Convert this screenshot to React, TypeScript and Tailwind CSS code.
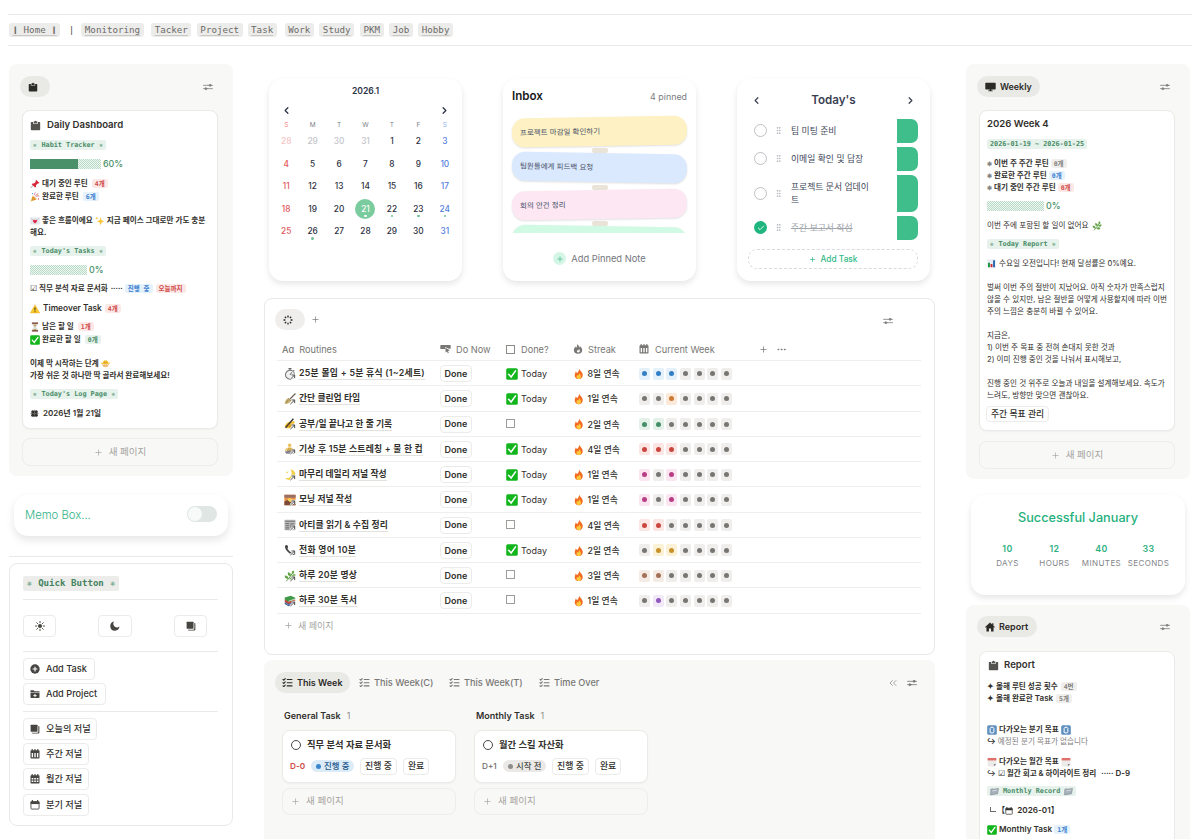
import React from 'react';
import { ChevronLeft, ChevronRight, ChevronsLeft, Check, Plus, Ellipsis, GripVertical } from 'lucide-react';

type IconProps = { className?: string };

const Clipboard = ({ className = '' }: IconProps) => (
  <svg viewBox="0 0 16 16" className={className} fill="currentColor">
    <path d="M2 3h2.500v2.600h7V3H14a.8.8 0 0 1 .8.8v10a1.200 1.200 0 0 1-1.200 1.200H2.400A1.200 1.200 0 0 1 1.200 13.800v-10A.8.8 0 0 1 2 3z" />
    <path d="M5.400 4.700V2.200h1.200a1.500 1.500 0 0 1 2.800 0h1.200v2.500z" />
  </svg>
);

const Sliders = ({ className = '' }: IconProps) => (
  <svg viewBox="0 0 18 14" className={className} fill="none" stroke="currentColor" strokeWidth="1.500" strokeLinecap="round">
    <path d="M1 4h10M15 4h2M1 10h2M7 10h10" />
    <circle cx="12.800" cy="4" r="1.800" fill="currentColor" />
    <circle cx="5.200" cy="10" r="1.800" fill="currentColor" />
  </svg>
);

const Spinner = ({ className = '' }: IconProps) => (
  <svg viewBox="0 0 16 16" className={className} fill="none" stroke="currentColor" strokeWidth="2.200">
    <path d="M8 .8v3M8 12.200v3M.8 8h3M12.200 8h3M2.900 2.900l2.100 2.100M11 11l2.100 2.100M2.900 13.100 5 11M11 5l2.100-2.100" />
  </svg>
);

const Clover = ({ className = '' }: IconProps) => (
  <svg viewBox="0 0 16 16" className={className} fill="currentColor">
    <circle cx="5" cy="5" r="2.900" />
    <circle cx="11" cy="5" r="2.900" />
    <circle cx="5" cy="11" r="2.900" />
    <circle cx="11" cy="11" r="2.900" />
    <path d="M.8 8h14.400M8 1.500v13" stroke="currentColor" strokeWidth="1" />
  </svg>
);

const Monitor = ({ className = '' }: IconProps) => (
  <svg viewBox="0 0 18 16" className={className} fill="currentColor">
    <path d="M1.500 1h15a1 1 0 0 1 1 1v9a1 1 0 0 1-1 1h-6v1.800h2.200V15H5.300v-1.200h2.200V12h-6a1 1 0 0 1-1-1V2a1 1 0 0 1 1-1z" />
  </svg>
);

const House = ({ className = '' }: IconProps) => (
  <svg viewBox="0 0 16 16" className={className} fill="currentColor">
    <path d="M8 .8 11.500 4V2h2v3.800L15.800 8l-.9 1-1.200-1v7H9.700v-4.500H6.300V15H2.300V8l-1.200 1-.9-1z" />
  </svg>
);

const Sun = ({ className = '' }: IconProps) => (
  <svg viewBox="0 0 16 16" className={className} fill="currentColor">
    <circle cx="8" cy="8" r="3.300" />
    <path d="M8 .6v2.200M8 13.200v2.200M.6 8h2.200M13.200 8h2.200M2.800 2.800l1.500 1.500M11.700 11.700l1.500 1.500M2.800 13.200l1.500-1.500M11.700 4.300l1.500-1.500" stroke="currentColor" strokeWidth="1.500" strokeLinecap="round" />
  </svg>
);

const Moon = ({ className = '' }: IconProps) => (
  <svg viewBox="0 0 16 16" className={className} fill="currentColor">
    <path d="M6.500.8a6 6 0 0 0 8.700 8.100A7.400 7.400 0 1 1 6.500.8z" />
  </svg>
);

const Book = ({ className = '' }: IconProps) => (
  <svg viewBox="0 0 16 16" className={className} fill="currentColor">
    <rect x="1" y="1" width="11" height="11.500" rx="1" />
    <path d="M13.300 3v9.500a1.300 1.300 0 0 1-1.300 1.300H3V14a1.200 1.200 0 0 0 1.200 1.200h9.300A1.500 1.500 0 0 0 15 13.700V4.200A1.200 1.200 0 0 0 13.800 3z" />
  </svg>
);

const PlusCircle = ({ className = '' }: IconProps) => (
  <svg viewBox="0 0 16 16" className={className}>
    <circle cx="8" cy="8" r="7.500" fill="currentColor" />
    <path d="M8 4.200v7.600M4.200 8h7.600" stroke="#fff" strokeWidth="1.800" />
  </svg>
);

const FolderPlus = ({ className = '' }: IconProps) => (
  <svg viewBox="0 0 16 16" className={className}>
    <path d="M.8 2h5l1.500 1.500h7.900v2H.8zM.8 6.500h14.400v6.800a1.200 1.200 0 0 1-1.200 1.200H2a1.200 1.200 0 0 1-1.200-1.200z" fill="currentColor" />
    <path d="M8 8v5M5.500 10.500h5" stroke="#fff" strokeWidth="1.500" />
  </svg>
);

const WeekCal = ({ className = '' }: IconProps) => (
  <svg viewBox="0 0 16 16" className={className}>
    <path d="M3.500 0v3M12.500 0v3M8 0v3" stroke="currentColor" strokeWidth="1.800" />
    <rect x=".8" y="2" width="14.400" height="13" rx="1.200" fill="currentColor" />
    <path d="M3.800 6.200v7M8 6.200v7M12.200 6.200v7" stroke="#fff" strokeWidth="2.200" />
  </svg>
);

const MonthCal = ({ className = '' }: IconProps) => (
  <svg viewBox="0 0 16 16" className={className}>
    <path d="M3.500 0v3M12.500 0v3M8 0v3" stroke="currentColor" strokeWidth="1.800" />
    <rect x=".8" y="2" width="14.400" height="13" rx="1.200" fill="currentColor" />
    <path d="M2.600 7.500h2.700M6.700 7.500h2.700M10.800 7.500h2.700M2.600 11.700h2.700M6.700 11.700h2.700M10.800 11.700h2.700" stroke="#fff" strokeWidth="2.300" />
  </svg>
);

const QuarterCal = ({ className = '' }: IconProps) => (
  <svg viewBox="0 0 16 16" className={className}>
    <path d="M3.800 0v3M12.200 0v3" stroke="currentColor" strokeWidth="1.800" />
    <rect x="1.500" y="2.500" width="13" height="12" rx="1.200" fill="none" stroke="currentColor" strokeWidth="1.400" />
    <path d="M1 2.500h14v4H1z" fill="currentColor" />
  </svg>
);

const TapIcon = ({ className = '' }: IconProps) => (
  <svg viewBox="0 0 18 16" className={className} fill="currentColor">
    <path d="M1.500 1.500h15a1 1 0 0 1 1 1v4a1 1 0 0 1-1 1h-1.700L8 4.700l.8 3.300H1.500a1 1 0 0 1-1-1V2.500a1 1 0 0 1 1-1z" />
    <path d="M8.700 5.800l7.500 4.200-3.200 1.200 1.500 3-1.700.8-1.400-3-2.200 1.800z" />
  </svg>
);

const FlameIcon = ({ className = '' }: IconProps) => (
  <svg viewBox="0 0 16 16" className={className}>
    <path d="M6.500.5c3 1.700 3.300 3.700 3 5.300.9-.3 1.300-1.300 1.200-2.600 2.600 1.700 4 4.300 4 6.500a6.600 6 0 0 1-13.300 0C1.400 7.500 3 6 3.300 4c1 .5 1.500 1.300 1.600 2.200C6.300 4.800 7 2.800 6.500.5z" fill="currentColor" />
    <path d="M9.500 8c1.500 1.300 1.700 2.600 1.300 3.800-.4 1.100-1.300 1.700-2.300 1.700-1.300 0-2.300-1-2.300-2.300 0-.7.300-1.200.7-1.700.3.600.7.900 1.100 1.100.8-.6 1.500-1.400 1.500-2.600z" fill="#fff" />
  </svg>
);

const Checklist = ({ className = '' }: IconProps) => (
  <svg viewBox="0 0 16 14" className={className} fill="none" stroke="currentColor" strokeWidth="1.700" strokeLinecap="round">
    <path d="M1 2.200l1.200 1.200L4.500 1M1 7.200l1.200 1.200L4.500 6M1 12.200l1.200 1.200L4.500 11M7.500 2.300H15M7.500 7.300H15M7.500 12.300H15" />
  </svg>
);

// Small colour pictograms, all on a 16 unit grid
const glyphs: Record<string, React.ReactNode> = {
  pin: (
    <>
      <path d="M1 14.500 6 9" stroke="#8a8f94" strokeWidth="1.200" />
      <path d="M9.500 1 15 6l-1.500 1.200-1-.2-3 3 .2 2.500-1.500 1-5.500-5 1-1.500 2.500.2 3-3-.2-1.200z" fill="#d8293a" />
    </>
  ),
  party: (
    <>
      <path d="M1 15 4.500 5.500l6.500 6z" fill="#e9a93c" />
      <path d="M3 11l3 2.500M4 8l4.500 4.500" stroke="#b5602b" strokeWidth="1" />
      <path d="M7 5c0-2 .5-3 2-4M9 8c2-2 3.500-2 6-1.500M8.500 6.500 13 2" stroke="#c55a8d" strokeWidth="1.300" fill="none" />
      <circle cx="4" cy="2.500" r="1" fill="#3e8ed0" />
      <circle cx="13.500" cy="11" r="1.100" fill="#d8453f" />
      <circle cx="12" cy="4.500" r="1" fill="#e9b82f" />
    </>
  ),
  letter: (
    <>
      <rect x=".5" y="2.500" width="15" height="11" rx="1" fill="#e3e6ea" />
      <path d="M.8 3 8 9l7.200-6" stroke="#bcc2c9" fill="none" />
      <path d="M8 12C5 10 4.500 8.500 4.600 7.300c.3-1.700 2.600-2 3.400-.4.800-1.600 3.100-1.300 3.400.4.100 1.200-.4 2.700-3.400 4.700z" fill="#e02b4b" />
    </>
  ),
  sparkles: (
    <>
      <path d="M9 2l1.500 4.700L15 8.500l-4.500 1.700L9 15l-1.500-4.800L3 8.500l4.500-1.800z" fill="#f8c534" />
      <path d="M3 1l.7 1.800 1.800.7-1.800.7L3 6l-.7-1.800L.5 3.500l1.800-.7z" fill="#f8c534" />
    </>
  ),
  warning: (
    <>
      <path d="M8 1 15.500 14.500H.5z" fill="#fcc72b" stroke="#e8ac15" strokeWidth=".6" strokeLinejoin="round" />
      <path d="M8 5.500v4.800M8 11.600v1.600" stroke="#2e2a1d" strokeWidth="1.500" />
    </>
  ),
  hourglass: (
    <>
      <path d="M4 2h8c0 3.500-2.500 4.500-2.800 6 .3 1.500 2.800 2.500 2.800 6H4c0-3.500 2.500-4.500 2.800-6C6.500 6.500 4 5.500 4 2z" fill="#e3e6e8" stroke="#a3a8ad" strokeWidth=".6" />
      <path d="M5 3.800h6L8 7.500zM5 13.500c.3-2.200 2-2.500 3-2.500s2.700.3 3 2.500z" fill="#c2984f" />
      <path d="M3 .8h10v2H3zM3 13.200h10v2H3z" fill="#6d3527" />
    </>
  ),
  check: (
    <>
      <rect x=".3" y=".3" width="15.400" height="15.400" rx="2" fill="#12b51c" />
      <path d="M3.500 8.300 6.800 12 12.700 3.800" stroke="#fff" strokeWidth="2.100" fill="none" strokeLinecap="round" />
    </>
  ),
  chick: (
    <>
      <path d="M2.500 9C2.500 4 5 2 8 2s5.500 2 5.500 7z" fill="#f6c22e" />
      <path d="M0 7l3 1M16 7l-3 1" stroke="#f6c22e" strokeWidth="2" />
      <path d="M2 8.500l2 1.500 2-1.500L8 10l2-1.500 2 1.500 2-1.500c.3 4-2 6-6 6s-6.300-2-6-6z" fill="#eebd7a" />
      <circle cx="6" cy="5.500" r=".7" fill="#4a3414" />
      <circle cx="10" cy="5.500" r=".7" fill="#4a3414" />
      <path d="M7 6.500h2L8 8z" fill="#d8712b" />
    </>
  ),
  stopwatch: (
    <>
      <circle cx="8" cy="9" r="6" fill="#f1f1f1" stroke="#737373" strokeWidth="1.400" />
      <path d="M8 .5v2.500M6 .8h4M12.500 3l1.300 1.300M8 9l2.500-3" stroke="#666" strokeWidth="1.400" />
    </>
  ),
  broom: (
    <>
      <path d="M15.300.7 8 8" stroke="#6d6455" strokeWidth="1.600" />
      <path d="M6 6.500 9.500 10c-1 3-4 4.500-8.500 4.500C1 11.500 2.500 7.500 6 6.500z" fill="#c9b070" />
      <path d="M5.500 7 9 10.500M3 13l2.500-3.500" stroke="#7e6a3a" strokeWidth=".9" />
    </>
  ),
  writing: (
    <>
      <path d="M1 11c1-3 3-5 6-6l2 .5L13 4l1.500 2-3 3.500 1 2-3 2H3.500z" fill="#f3bd2f" />
      <path d="M12.500 1 2 13" stroke="#38342d" strokeWidth="1.800" />
      <path d="M5 9.500h5M6 11.500h4" stroke="#bb841c" strokeWidth=".9" />
    </>
  ),
  lotus: (
    <>
      <circle cx="7.500" cy="3" r="2.300" fill="#ecc05a" />
      <path d="M5 6h5l1.500 5H3.500z" fill="#d9ad46" />
      <path d="M1 11.500 5 10h5l5 1.500-2 2.800H3z" fill="#85858d" />
      <path d="M4 7 1.500 10.500M11 7l2.500 3.500" stroke="#ecc05a" strokeWidth="1.600" />
    </>
  ),
  moon: (
    <>
      <path d="M8.500.8c5 .2 7 4 6.500 7.700-.6 4-4 6.500-8 6-2.500-.3-4.500-1-6-2.500 4 .8 8-.5 9-4.500.6-2.500 0-5-1.500-6.700z" fill="#f2cf4a" />
      <path d="M4 2.500l.5 1.400 1.400.5-1.400.5L4 6.300l-.5-1.400-1.400-.5 1.400-.5z" fill="#f2cf4a" />
    </>
  ),
  sunrise: (
    <>
      <rect x=".5" y="1" width="15" height="14" rx="1" fill="#eb9344" />
      <path d="M.5 1h15v4H.5z" fill="#9a6f68" />
      <circle cx="7.500" cy="8.500" r="3" fill="#f8d75a" />
      <path d="M.5 15V10l4-2 4 3 3-2 4 2v4z" fill="#7b4b3a" />
    </>
  ),
  news: (
    <>
      <rect x=".5" y="1" width="15" height="14" rx="1" fill="#bdbdbd" />
      <path d="M1.500 3h13M2 6h5M2 8.500h5M2 11h5M2 13.300h5" stroke="#707070" strokeWidth="1.300" />
      <rect x="8.500" y="5.500" width="5.500" height="8" fill="#858585" />
    </>
  ),
  phone: (
    <path d="M2 1.500C4.500.5 5.500 2.500 5.500 4.500L4.600 5.800c1 2.400 3 4.400 5.500 5.500l1.300-.9c2 0 4.300 1 3.300 3.500-4.500 3.500-16.500-8-12.700-12.400z" fill="#494949" />
  ),
  herb: (
    <>
      <path d="M3 15C6 12 9 8 12 3" stroke="#4c8a33" strokeWidth="1.200" fill="none" />
      <path d="M12 5C9.500 4 10 1.500 12.500.5c1.500 2 1.500 3.500-.5 4.500zM9 8C5 8 4.500 5 5.500 3c3 .5 4.500 2.500 3.500 5zM6 12C2.500 12 .5 9.500 1 7.500c3-.2 5.500 2 5 4.500zM10 8c1-2.500 3.500-3 5.500-2-.5 3-3 4-5.500 2zM7 12c1.500-2.500 4.500-2.500 6.500-1-1 2.800-4.500 3.500-6.500 1z" fill="#63a546" />
    </>
  ),
  books: (
    <>
      <path d="M1 9.500l9-2 5 2.500-9 3.500z" fill="#4b79b8" />
      <path d="M1 9.500v2.500l5 3 9-3.500V10l-9 3.500z" fill="#365680" />
      <path d="M1 6l9-2 5 2.500v2l-9 3.500-5-3z" fill="#c54338" />
      <path d="M1 3.300 9 1l6 2.500v2L6 9 1 6z" fill="#409a49" />
      <path d="M6 8.500l9-3.500" stroke="#eee" strokeWidth="1" />
    </>
  ),
  fire: (
    <>
      <path d="M8.500.3c.2 3 4.500 4.500 5 9 .3 3.700-2.200 6.400-5.500 6.400S2.200 13.300 2.400 9.800C2.500 7.800 3.500 6.500 3.700 4.700c1.200.7 1.700 1.700 1.800 2.700C7.500 5.700 8.600 3 8.500.3z" fill="#f26a21" />
      <path d="M8.500 6.500c.3 1.800 2.800 3 2.700 5.700-.1 2-1.400 3.300-3.200 3.300s-3.200-1.300-3.200-3.200c0-1.300.6-2.100 1-3 .6.400.9.900 1 1.500C8 9.800 8.600 8.300 8.500 6.500z" fill="#fcc83c" />
    </>
  ),
  chart: (
    <>
      <rect x=".5" y=".5" width="15" height="15" rx="1" fill="#e8eef4" />
      <path d="M1.800 6.500h3.400v8H1.800z" fill="#17963c" />
      <path d="M6.300 9h3.400v5.500H6.300z" fill="#cf2e2e" />
      <path d="M10.800 2h3.400v12.500h-3.400z" fill="#2469b5" />
    </>
  ),
  cycle: (
    <>
      <rect x=".3" y=".3" width="15.400" height="15.400" rx="2.500" fill="#5f90bf" />
      <path d="M5 12V5.500C5 2.800 11 2.800 11 5.500V11c0 2.500-6 2.500-6 0" stroke="#fff" strokeWidth="1.600" fill="none" />
    </>
  ),
  planner: (
    <>
      <path d="M1 2h14v9l-4 4H1z" fill="#ecebea" />
      <path d="M1 1.500h14v4H1z" fill="#df706b" />
      <path d="M11 15v-4h4z" fill="#8e8b8a" />
    </>
  ),
  dividers: (
    <>
      <path d="M1.500 4 5 3l1.500 1L15 2.500 13.500 12 1 14z" fill="#a7b1bb" stroke="#6f7a85" strokeWidth=".9" />
      <path d="M4 7l9-1.500" stroke="#e9edf0" strokeWidth="1.200" />
    </>
  ),
};

const Glyph = ({ name, className = 'size-[10px]', linked = false }: { name: string; className?: string; linked?: boolean }) => (
  <svg viewBox="0 0 16 16" className={`shrink-0 ${className}`} fill="none">
    {glyphs[name]}
    {linked && (
      <>
        <path d="M8.500 14.800 14 9.500M10 9.300h4.200v4.200" stroke="#fff" strokeWidth="3" />
        <path d="M8.500 14.800 14 9.500M10 9.300h4.200v4.200" stroke="#4a4a48" strokeWidth="1.300" />
      </>
    )}
  </svg>
);

const tagColors = {
  red: 'bg-[#fce9e7] text-[#cf4a47]',
  blue: 'bg-[#e5f1fb] text-[#3b7fd0]',
  green: 'bg-[#e6f2eb] text-[#4a8d68]',
  gray: 'bg-[#f0efed] text-[#81807c]',
};

const Tag = ({ color, children, className = '' }: { color: keyof typeof tagColors; children: React.ReactNode; className?: string }) => (
  <span className={`flex h-[9px] items-center rounded-[2px] px-[3px] font-['DejaVu_Sans_Mono','Noto_Sans_CJK_KR',monospace] text-[6.500px] font-bold leading-none ${tagColors[color]} ${className}`}>
    {children}
  </span>
);

const Heading = ({ children }: { children: React.ReactNode }) => (
  <span className="flex h-[10px] items-center whitespace-pre rounded-[2px] bg-[#e6f2eb] px-[3px] font-['DejaVu_Sans_Mono',monospace] text-[6.800px] font-bold leading-none text-[#4a8d68]">
    {children}
  </span>
);

const Starred = ({ children }: { children: string }) => (
  <Heading>
    <span className="w-[4px] text-[6px] text-[#86b39a]">✱</span>
    <span className="px-[4.500px]">{children}</span>
    <span className="w-[4px] text-[6px] text-[#86b39a]">✱</span>
  </Heading>
);

const Line = ({ className = '', children }: { className?: string; children: React.ReactNode }) => (
  <div className={`flex h-3 items-center whitespace-nowrap pt-[1.500px] text-[7.600px] leading-[11px] text-[#32302c] ${className}`}>{children}</div>
);

const Block = ({ className = '', children }: { className?: string; children: React.ReactNode }) => (
  <div className={`flex h-3 items-center whitespace-nowrap ${className}`}>{children}</div>
);

const Progress = ({ percent, fill, rest }: { percent: string; fill?: string; rest: string }) => (
  <>
    {fill && <span className={`h-[10px] bg-[#4a9068] ${fill}`} />}
    <span className={`h-[10px] bg-[repeating-conic-gradient(#b9dac7_0_25%,#eff7f2_0_50%)] bg-[size:2px_2px] ${rest}`} />
    <span className="ml-[2px] text-[8.900px] font-medium text-[#4a9068]">{percent}</span>
  </>
);

const NewPage = ({ className = '' }: { className?: string }) => (
  <div className={`flex h-[28px] items-center rounded-[8px] border border-[#ededeb] text-[9.500px] text-[#a5a4a0] ${className}`}>
    <Plus className="mr-[6px] size-[9px]" strokeWidth={1.8} />
    새 페이지
  </div>
);

const navItems = [
  { label: 'Monitoring', gap: 'ml-[7px]' },
  { label: 'Tacker', gap: 'ml-[7.500px]' },
  { label: 'Project', gap: 'ml-[5.500px]' },
  { label: 'Task', gap: 'ml-[5px]' },
  { label: 'Work', gap: 'ml-[8px]' },
  { label: 'Study', gap: 'ml-[5.500px]' },
  { label: 'PKM', gap: 'ml-[6px]' },
  { label: 'Job', gap: 'ml-[5.500px]' },
  { label: 'Hobby', gap: 'ml-[5.500px]' },
];

const TopNav = () => (
  <nav className="mx-2 mt-[14px] flex h-[32px] items-center border-y border-[#e9e9e7] pl-px font-['DejaVu_Sans_Mono',monospace] text-[9.200px] text-[#6d6b67]">
    <span className="flex h-[14px] items-center whitespace-pre rounded-[3px] bg-[#ececeb] px-[3.500px] underline decoration-[#c9c8c5] underline-offset-2">❙ Home ❙</span>
    <span className="ml-[8.500px] text-[#55534f]">|</span>
    {navItems.map((item) => (
      <span key={item.label} className={`flex h-[14px] items-center rounded-[3px] bg-[#ececeb] px-[3.500px] underline decoration-[#c9c8c5] underline-offset-2 ${item.gap}`}>
        {item.label}
      </span>
    ))}
  </nav>
);

const DailyPanel = () => (
  <section className="h-[412px] rounded-[8px] bg-[#f8f8f7] pl-[13px] pr-[15px] pt-[12px]">
    <div className="-ml-[2px] flex items-center justify-between pr-[5px]">
      <span className="flex h-[21px] w-[30px] items-center rounded-full bg-[#e9e9e6] pl-[8px] text-[#2c2a27]">
        <Clipboard className="size-[10px]" />
      </span>
      <Sliders className="h-[8px] w-[10px] text-[#82817d]" />
    </div>
    <div className="mt-[13px] h-[319px] rounded-[8px] border border-[#eaeae8] bg-white px-[7px] pt-[7px] shadow-[0_1px_2px_rgba(0,0,0,0.04)]">
      <div className="flex h-[14px] items-center text-[9.600px] font-semibold text-[#32302c]">
        <Clipboard className="mr-[6px] size-[11px] text-[#55534f]" />
        Daily Dashboard
      </div>
      <Block className="mt-[7px]"><Starred>Habit Tracker</Starred></Block>
      <Block className="mt-[7px]"><Progress percent="60%" fill="w-[48px]" rest="w-[23px]" /></Block>
      <Line className="mt-[7px] font-semibold"><Glyph name="pin" className="mr-[2px] size-[10px]" />대기 중인 루틴<Tag color="red" className="ml-[4px]">4개</Tag></Line>
      <Line className="mt-px font-semibold"><Glyph name="party" className="mr-[2px] size-[10px]" />완료한 루틴<Tag color="blue" className="ml-[4px]">6개</Tag></Line>
      <Line className="mt-[12px] font-semibold">
        <Glyph name="letter" className="mr-[2px] size-[10px]" />좋은 흐름이에요<Glyph name="sparkles" className="mx-[2px] size-[10px]" />지금 페이스 그대로만 가도 충분
      </Line>
      <Line className="font-semibold">해요.</Line>
      <Block className="mt-[7px]"><Starred>Today's Tasks</Starred></Block>
      <Block className="mt-[7px]"><Progress percent="0%" rest="w-[57px]" /></Block>
      <Line className="mt-[6px] font-semibold">
        <span className="mr-[2px] font-normal">☑</span>직무 분석 자료 문서화 <span className="ml-[3px]">·····</span>
        <Tag color="blue" className="ml-[2px]">진행 중</Tag><Tag color="red" className="ml-[3px]">오늘까지</Tag>
      </Line>
      <Line className="mt-[8px] text-[8.300px]! font-semibold"><Glyph name="warning" className="mr-[3px] size-[10px]" />Timeover Task<Tag color="red" className="ml-[3px]">4개</Tag></Line>
      <Line className="mt-[6px] font-semibold"><Glyph name="hourglass" className="mr-[2px] size-[10px]" />남은 할 일<Tag color="red" className="ml-[4px]">1개</Tag></Line>
      <Line className="mt-px font-semibold"><Glyph name="check" className="mr-[2px] size-[10px]" />완료한 할 일<Tag color="green" className="ml-[4px]">0개</Tag></Line>
      <Line className="mt-[12px] font-semibold">이제 막 시작하는 단계<Glyph name="chick" className="ml-[2px] size-[9px]" /></Line>
      <Line className="font-semibold">가장 쉬운 것 하나만 딱 골라서 완료해보세요!</Line>
      <Block className="mt-[7px]"><Starred>Today's Log Page</Starred></Block>
      <Line className="mt-[7px] text-[8px]! font-semibold"><Clover className="mr-[4px] size-[9px]" />2026년 1월 21일</Line>
    </div>
    <NewPage className="mt-[9px] justify-center" />
  </section>
);

const QuickButton = ({ icon: Icon, label, width }: { icon: React.FC<IconProps>; label?: string; width: string }) => (
  <button className={`flex h-[22px] items-center rounded-[4px] border border-[#ebebe9] pl-[6px] text-[9.200px] font-medium text-[#32302c] ${width} ${label ? '' : 'justify-center pl-0!'}`}>
    <Icon className="size-[10px] shrink-0 text-[#474541]" />
    {label && <span className="ml-[6px] whitespace-nowrap">{label}</span>}
  </button>
);

const journals = [
  { label: '오늘의 저널', icon: Book, width: 'w-[74px]' },
  { label: '주간 저널', icon: WeekCal, width: 'w-[66px]' },
  { label: '월간 저널', icon: MonthCal, width: 'w-[66px]' },
  { label: '분기 저널', icon: QuarterCal, width: 'w-[66px]' },
];

const LeftColumn = () => (
  <aside className="w-[224px] shrink-0">
    <DailyPanel />
    <div className="mx-[5px] mt-[19px] flex h-[41px] items-center justify-between rounded-[14px] bg-white pl-[11px] pr-[11px] shadow-[0_4px_8px_rgba(0,0,0,0.1)]">
      <span className="text-[11.300px] font-light text-[#2fb487]">Memo Box...</span>
      <span className="mb-[3px] flex h-[16px] w-[30px] items-center rounded-full bg-[#dfe6e3] pl-[1px]">
        <span className="size-[14px] rounded-full bg-[#f7faf9]" />
      </span>
    </div>
    <hr className="mt-[20px] border-[#e9e9e7]" />
    <section className="mt-[6px] h-[263px] rounded-[8px] border border-[#e9e9e7] pl-[13px] pr-[14px] pt-[12px]">
      <div className="flex h-[15px] w-[96px] items-center justify-between rounded-[2px] bg-[#ececeb] px-[4px] font-['DejaVu_Sans_Mono',monospace] text-[9.100px] font-bold text-[#44835f]">
        <span className="text-[8px] text-[#86b39a]">✱</span>
        <span>Quick Button</span>
        <span className="text-[8px] text-[#86b39a]">✱</span>
      </div>
      <hr className="mt-[8px] border-[#e9e9e7]" />
      <div className="mt-[15px] flex gap-[42px]">
        <QuickButton icon={Sun} width="w-[33px]" />
        <QuickButton icon={Moon} width="w-[34px]" />
        <QuickButton icon={Book} width="w-[33px]" />
      </div>
      <hr className="mt-[14px] border-[#e9e9e7]" />
      <div className="mt-[6px] flex flex-col gap-[3px]">
        <QuickButton icon={PlusCircle} label="Add Task" width="w-[72px]" />
        <QuickButton icon={FolderPlus} label="Add Project" width="w-[83px]" />
      </div>
      <hr className="mt-[6px] border-[#e9e9e7]" />
      <div className="mt-[6px] flex flex-col gap-[3.200px]">
        {journals.map((j) => <QuickButton key={j.label} {...j} />)}
      </div>
    </section>
  </aside>
);

const weeks = [
  [28, 29, 30, 31, 1, 2, 3],
  [4, 5, 6, 7, 8, 9, 10],
  [11, 12, 13, 14, 15, 16, 17],
  [18, 19, 20, 21, 22, 23, 24],
  [25, 26, 27, 28, 29, 30, 31],
];
const marked = [22, 23, 24, 26];

const dayColor = (day: number, col: number, row: number) => {
  if (row === 0 && day > 7) return col === 0 ? 'text-[#f6c4c4]' : 'text-[#c3c4c9]';
  if (col === 0) return 'text-[#e2555a]';
  if (col === 6) return 'text-[#5580e0]';
  return 'text-[#2c3040]';
};

const card = 'h-[202px] w-[193px] shrink-0 rounded-[14px] bg-white shadow-[0_3px_6px_rgba(0,0,0,0.1)]';

const CalendarCard = () => (
  <div className={`${card} px-[4px] pt-[5px]`}>
    <div className="h-[14px] text-center text-[8.600px] font-semibold leading-[14px] text-[#2c3346]">2026.1</div>
    <div className="mt-[6px] flex h-3 items-center justify-between px-[8px] text-[#2c3346]">
      <ChevronLeft className="size-[11px]" strokeWidth={2.800} />
      <ChevronRight className="size-[11px]" strokeWidth={2.800} />
    </div>
    <div className="mt-[2px] grid h-[12px] grid-cols-7 items-end text-center text-[6.500px] leading-[10px] text-[#7c7f88]">
      {['S', 'M', 'T', 'W', 'T', 'F', 'S'].map((d, i) => (
        <span key={i} className={i === 0 ? 'text-[#ef8585]' : i === 6 ? 'text-[#8fb0ea]' : ''}>{d}</span>
      ))}
    </div>
    {weeks.map((week, row) => (
      <div key={row} className="grid h-[22.500px] grid-cols-7 place-items-center text-[8.300px] font-medium">
        {week.map((day, col) => (
          <span key={col} className={`relative flex size-[20px] items-center justify-center rounded-full ${row === 3 && day === 21 ? 'bg-[#7acb9d] text-white' : dayColor(day, col, row)}`}>
            {day}
            {row > 2 && (marked.includes(day) || day === 21) && (
              <span className={`absolute bottom-[1.500px] size-[2.500px] rounded-full ${day === 21 ? 'bg-white' : 'bg-[#6cc193]'}`} />
            )}
          </span>
        ))}
      </div>
    ))}
  </div>
);

const Note = ({ text, look }: { text?: string; look: string }) => (
  <div className={`h-[29px] shrink-0 rounded-[13px] px-[8px] text-[7.500px] leading-[29px] text-[#475066] shadow-[0_1px_2px_rgba(0,0,0,0.12)] ${look}`}>{text}</div>
);

const Tape = () => <div className="mx-auto mt-[2.300px] h-[5px] w-[16px] shrink-0 rounded-[2px] bg-[#eae4d8]" />;

const InboxCard = () => (
  <div className={`${card} px-[9px] pt-[9px]`}>
    <div className="flex h-[17px] items-center justify-between">
      <span className="text-[11.600px] font-semibold text-[#17181b]">Inbox</span>
      <span className="text-[8.900px] text-[#7b7d82]">4 pinned</span>
    </div>
    <div className="-mx-[2px] flex h-[128px] flex-col overflow-hidden px-[2px] pt-[12px]">
      <Note text="프로젝트 마감일 확인하기" look="-rotate-1 bg-[#fef1c3]" />
      <Tape />
      <Note text="팀원들에게 피드백 요청" look="rotate-1 bg-[#dbe9fe]" />
      <Tape />
      <Note text="회의 안건 정리" look="-rotate-1 bg-[#fce7f3]" />
      <Tape />
      <Note look="rotate-1 bg-[#d1fae5]" />
    </div>
    <div className="mt-[19px] flex items-center justify-center text-[9.300px] text-[#74767c]">
      <span className="mr-[5px] flex size-[13px] items-center justify-center rounded-full bg-[#d5f6e6] text-[#3cba8b]">
        <Plus className="size-[8px]" />
      </span>
      Add Pinned Note
    </div>
  </div>
);

const todos = [
  { text: '팀 미팅 준비', height: 'h-[24px]', done: false },
  { text: '이메일 확인 및 답장', height: 'h-[24px]', done: false },
  { text: '프로젝트 문서 업데이트', height: 'h-[37px]', done: false },
  { text: '주간 보고서 작성', height: 'h-[24px]', done: true },
];

const TodayCard = () => (
  <div className={`${card} pl-[11px] pr-[12px] pt-[13px]`}>
    <div className="flex h-[17px] items-center justify-between pl-[3px] pr-[2px] text-[#3a4052]">
      <ChevronLeft className="size-[11px]" strokeWidth={2.600} />
      <span className="text-[11.600px] font-semibold">Today's</span>
      <ChevronRight className="size-[11px]" strokeWidth={2.600} />
    </div>
    <div className="mt-[9.500px] flex flex-col gap-[4px]">
      {todos.map((todo) => (
        <div key={todo.text} className={`flex items-center pl-[6px] ${todo.height}`}>
          {todo.done ? (
            <span className="flex size-[13px] shrink-0 items-center justify-center rounded-full bg-[#1fb57e]">
              <Check className="size-[8px] text-white" strokeWidth={2.600} />
            </span>
          ) : (
            <span className="size-[13px] shrink-0 rounded-full border-[1.500px] border-[#bdc0c4]" />
          )}
          <GripVertical className="ml-[7px] size-[9px] shrink-0 text-[#b8bbc0]" strokeWidth={2.500} />
          <span className={`ml-[8px] w-[84px] break-all text-[8.800px] leading-[13px] ${todo.done ? 'text-[#a2a6ad] line-through' : 'text-[#40475a]'}`}>{todo.text}</span>
          <span className="ml-auto h-full w-[21px] rounded-r-[7px] bg-[#3fbe8c]" />
        </div>
      ))}
    </div>
    <div className="mt-[9.500px] flex h-[20px] items-center justify-center rounded-[9px] border border-dashed border-[#d7dade] text-[8.300px] font-medium text-[#2fb888]">
      <Plus className="mr-[5px] size-[7px]" strokeWidth={2.500} />
      Add Task
    </div>
  </div>
);

const dotColors: Record<string, string> = {
  n: 'bg-[#efeeec] text-[#787673]',
  b: 'bg-[#e5f1fa] text-[#337fc4]',
  o: 'bg-[#fce9da] text-[#cc7a34]',
  g: 'bg-[#e3f1e9] text-[#478e68]',
  r: 'bg-[#fce6e3] text-[#c9473f]',
  p: 'bg-[#fae5f0] text-[#b83f86]',
  y: 'bg-[#fbf1d6] text-[#c8922b]',
  t: 'bg-[#f5ebe5] text-[#a3705a]',
  v: 'bg-[#f1e8f8] text-[#9059bb]',
};

const routines = [
  { icon: 'stopwatch', name: '25분 몰입 + 5분 휴식 (1~2세트)', spacing: 'tracking-[0.28px]', done: true, streak: 8, week: 'bbbnnnn' },
  { icon: 'broom', name: '간단 클린업 타임', spacing: '', done: true, streak: 1, week: 'nnonnnn' },
  { icon: 'writing', name: '공부/일 끝나고 한 줄 기록', spacing: '', done: false, streak: 2, week: 'ggnnnnn' },
  { icon: 'lotus', name: '기상 후 15분 스트레칭 + 물 한 컵', spacing: 'tracking-[0.2px]', done: true, streak: 4, week: 'rrrnnnn' },
  { icon: 'moon', name: '마무리 데일리 저널 작성', spacing: '', done: true, streak: 1, week: 'pnpnnnn' },
  { icon: 'sunrise', name: '모닝 저널 작성', spacing: '', done: true, streak: 1, week: 'pnpnnnn' },
  { icon: 'news', name: '아티클 읽기 & 수집 정리', spacing: 'tracking-[0.1px]', done: false, streak: 4, week: 'rrnnnnn' },
  { icon: 'phone', name: '전화 영어 10분', spacing: 'tracking-[0.3px]', done: true, streak: 2, week: 'nyynnnn' },
  { icon: 'herb', name: '하루 20분 명상', spacing: 'tracking-[0.2px]', done: false, streak: 3, week: 'ttnnnnn' },
  { icon: 'books', name: '하루 30분 독서', spacing: 'tracking-[0.2px]', done: false, streak: 1, week: 'nvnnnnn' },
];

const tableCols = 'grid grid-cols-[158px_66px_67px_66px_1fr] items-center';

const RoutineTable = () => (
  <section className="mt-[17px] h-[357px] rounded-[8px] border border-[#e9e9e7] pl-[12px] pr-[13px] pt-[10px]">
    <div className="-ml-[2px] flex h-[21px] items-center">
      <span className="flex h-[21px] w-[30px] items-center rounded-full bg-[#efeeec] pl-[8px]">
        <Spinner className="size-[10px] text-[#2c2a27]" />
      </span>
      <Plus className="ml-[6px] size-[9px] text-[#82817d]" />
      <Sliders className="ml-auto mr-[28px] mt-[2px] h-[8px] w-[10px] text-[#82817d]" />
    </div>
    <div className={`${tableCols} mt-[7px] h-[24px] border-b border-[#eeeeec] pl-[5px] pt-[2px] text-[9.200px] text-[#787774]`}>
      <span className="flex items-center"><span className="mr-[5px] font-medium">Aɑ</span>Routines</span>
      <span className="flex items-center"><TapIcon className="mr-[5px] h-[10px] w-[11px]" />Do Now</span>
      <span className="flex items-center"><span className="mr-[6px] size-[9px] border-[1.500px] border-[#8c8b87]" />Done?</span>
      <span className="flex items-center"><FlameIcon className="mr-[5px] size-[10px]" />Streak</span>
      <span className="flex items-center">
        <WeekCal className="mr-[6px] size-[10px]" />Current Week
        <Plus className="ml-[44px] size-[9px]" />
        <Ellipsis className="ml-[8px] size-[11px]" />
      </span>
    </div>
    {routines.map((r) => (
      <div key={r.name} className={`${tableCols} h-[25.250px] border-b border-[#eeeeec] pl-[5px] pt-px text-[9px] font-medium text-[#32302c]`}>
        <span className="flex items-center pl-[2px]">
          <Glyph name={r.icon} className="mr-[3px] size-[12px]" linked />
          <span className={`whitespace-nowrap border-b border-[#e2e1de] text-[8.800px] font-semibold leading-[12px] ${r.spacing}`}>{r.name}</span>
        </span>
        <span className="flex"><span className="flex h-[17px] w-[32px] items-center justify-center rounded-[4px] border border-[#ebebe9] font-semibold">Done</span></span>
        <span className="flex items-center font-normal">
          {r.done ? (
            <><Glyph name="check" className="mr-[3px] size-[12px]" />Today</>
          ) : (
            <span className="mb-[2px] size-[9px] border border-[#9d9c98]" />
          )}
        </span>
        <span className="flex items-center whitespace-nowrap text-[8.800px] font-medium"><Glyph name="fire" className="mr-[3px] size-[11.500px]" />{r.streak}일 연속</span>
        <span className="flex gap-[2.700px]">
          {r.week.split('').map((c, i) => (
            <span key={i} className={`flex h-[12px] w-[11px] items-center justify-center rounded-[2px] ${dotColors[c]}`}>
              <span className="size-[5px] rounded-full bg-current" />
            </span>
          ))}
        </span>
      </div>
    ))}
    <div className="flex h-[24px] items-center pl-[7px] text-[9px] text-[#a5a4a0]"><Plus className="mr-[5px] size-[9px]" />새 페이지</div>
  </section>
);

const boards = [
  { group: 'General Task', title: '직무 분석 자료 문서화', due: 'D-0', dueStyle: 'font-semibold text-[#cf4a47]', status: '진행 중', statusColor: 'bg-[#dcebf8] text-[#24588c]', dot: 'bg-[#3b86cf]' },
  { group: 'Monthly Task', title: '월간 스킬 자산화', due: 'D+1', dueStyle: 'font-medium text-[#6d6b67]', status: '시작 전', statusColor: 'bg-[#eae9e7] text-[#4b4946]', dot: 'bg-[#8f8d89]' },
];

const SmallButton = ({ children }: { children: React.ReactNode }) => (
  <span className="flex h-[17px] items-center rounded-[4px] border border-[#ebebe9] px-[4px] text-[8.900px] font-medium">{children}</span>
);

const TaskBoard = () => (
  <section className="mt-[5px] h-[190px] rounded-[8px] bg-[#f8f8f7] px-[11px] pt-[12px]">
    <div className="flex h-[21px] items-center text-[9.200px] font-medium text-[#787774]">
      <span className="flex h-[21px] w-[75px] items-center whitespace-nowrap rounded-full bg-[#e9e9e6] pl-[7px] text-[9px] font-semibold text-[#2c2a27]"><Checklist className="mr-[4px] h-[9px] w-[11px]" />This Week</span>
      <span className="ml-[9px] flex w-[90px] items-center"><Checklist className="mr-[4px] h-[9px] w-[11px]" />This Week(C)</span>
      <span className="flex w-[90px] items-center"><Checklist className="mr-[4px] h-[9px] w-[11px]" />This Week(T)</span>
      <span className="flex items-center"><Checklist className="mr-[4px] h-[9px] w-[11px]" />Time Over</span>
      <ChevronsLeft className="ml-auto size-[12px] text-[#a5a4a0]" />
      <Sliders className="ml-[8px] mr-[7px] h-[8px] w-[10px]" />
    </div>
    <div className="ml-[7px] mt-[14px] flex gap-[18px]">
      {boards.map((b) => (
        <div key={b.group} className="w-[174px]">
          <div className="flex h-[16px] items-center pl-[2px] pt-[2px] text-[9px] font-semibold text-[#32302c]">
            {b.group}<span className="ml-[6px] font-normal text-[#8f8d89]">1</span>
          </div>
          <div className="mt-[7px] h-[53px] rounded-[8px] border border-[#eaeae8] bg-white px-[8px] pt-[6px] text-[#32302c] shadow-[0_1px_2px_rgba(0,0,0,0.04)]">
            <div className="flex h-[15px] items-center text-[9.300px] font-semibold">
              <span className="mr-[6px] size-[10px] rounded-full border-[1.500px] border-[#4a4844]" />{b.title}
            </div>
            <div className="mt-[5px] flex h-[18px] items-center whitespace-nowrap">
              <span className={`-ml-px w-[21px] text-[8.200px] ${b.dueStyle}`}>{b.due}</span>
              <span className={`flex h-[12px] w-[43px] items-center rounded-full pl-[5px] text-[8.400px] font-medium ${b.statusColor}`}>
                <span className={`mr-[3px] size-[5px] rounded-full ${b.dot}`} />{b.status}
              </span>
              <span className="ml-[6px] flex gap-[6px]"><SmallButton>진행 중</SmallButton><SmallButton>완료</SmallButton></span>
            </div>
          </div>
          <NewPage className="mt-[5px] h-[27px]! pl-[8px]" />
        </div>
      ))}
    </div>
  </section>
);

const WeeklyPanel = () => (
  <section className="h-[415px] rounded-[8px] bg-[#f8f8f7] pl-[13px] pr-[15px] pt-[12px]">
    <div className="-ml-[2px] flex items-center justify-between pr-[5px]">
      <span className="flex h-[21px] w-[63px] items-center rounded-full bg-[#e9e9e6] pl-[8px] text-[8.900px] font-semibold text-[#2c2a27]">
        <Monitor className="mr-[4px] h-[10px] w-[11px]" />Weekly
      </span>
      <Sliders className="h-[8px] w-[10px] text-[#82817d]" />
    </div>
    <div className="mt-[13px] h-[321px] rounded-[8px] border border-[#eaeae8] bg-white px-[7px] pt-[6px] shadow-[0_1px_2px_rgba(0,0,0,0.04)]">
      <div className="flex h-[14px] items-center text-[9.600px] font-semibold text-[#32302c]">2026 Week 4</div>
      <Block className="mt-[7px]"><Heading>2026-01-19 ~ 2026-01-25</Heading></Block>
      <Line className="mt-[7px] font-semibold"><span className="mr-[2px] text-[6px] text-[#85837f]">✱</span>이번 주 주간 루틴<Tag color="gray" className="ml-[2px]">0개</Tag></Line>
      <Line className="font-semibold"><span className="mr-[2px] text-[6px] text-[#85837f]">✱</span>완료한 주간 루틴<Tag color="blue" className="ml-[2px]">0개</Tag></Line>
      <Line className="font-semibold"><span className="mr-[2px] text-[6px] text-[#85837f]">✱</span>대기 중인 주간 루틴<Tag color="red" className="ml-[2px]">0개</Tag></Line>
      <Block className="mt-[7px]"><Progress percent="0%" rest="w-[57px]" /></Block>
      <Line className="mt-[7px]">이번 주에 포함된 할 일이 없어요<Glyph name="herb" className="ml-[3px] size-[10px]" /></Line>
      <Block className="mt-[7px]"><Starred>Today Report</Starred></Block>
      <Line className="mt-[7px]"><Glyph name="chart" className="mr-[3px] size-[9px]" />수요일 오전입니다! 현재 달성률은 0%예요.</Line>
      <Line className="mt-[12px]">벌써 이번 주의 절반이 지났어요. 아직 숫자가 만족스럽지</Line>
      <Line>않을 수 있지만, 남은 절반을 어떻게 사용할지에 따라 이번</Line>
      <Line>주의 느낌은 충분히 바뀔 수 있어요.</Line>
      <Line className="mt-[12px]">지금은,</Line>
      <Line>1) 이번 주 목표 중 전혀 손대지 못한 것과</Line>
      <Line>2) 이미 진행 중인 것을 나눠서 표시해보고,</Line>
      <Line className="mt-[12px]">진행 중인 것 위주로 오늘과 내일을 설계해보세요. 속도가</Line>
      <Line>느려도, 방향만 맞으면 괜찮아요.</Line>
      <div className="-ml-px mt-[5px] flex h-[16px] w-[63px] items-center justify-center rounded-[4px] border border-[#ebebe9] text-[8.800px] font-medium text-[#32302c]">주간 목표 관리</div>
    </div>
    <NewPage className="mt-[10px] justify-center" />
  </section>
);

const countdown = [
  { value: 10, unit: 'DAYS' },
  { value: 12, unit: 'HOURS' },
  { value: 40, unit: 'MINUTES' },
  { value: 33, unit: 'SECONDS' },
];

const Countdown = () => (
  <div className="mx-[5px] mt-[16px] h-[100px] rounded-[14px] bg-white pl-[13px] pr-[13px] pt-[14px] shadow-[0_3px_6px_rgba(0,0,0,0.1)]">
    <div className="h-[18px] text-center text-[12.700px] font-medium leading-[18px] text-[#25b07c]">Successful January</div>
    <div className="mt-[14px] grid grid-cols-4 text-center">
      {countdown.map((c) => (
        <div key={c.unit} className="flex flex-col items-center">
          <span className="h-[15px] text-[8.800px] font-semibold leading-[15px] tracking-[0.4px] text-[#2fb17f]">{c.value}</span>
          <span className="h-[14px] text-[8px] leading-[14px] tracking-[0.4px] text-[#83858a]">{c.unit}</span>
        </div>
      ))}
    </div>
  </div>
);

const ReportPanel = () => (
  <section className="mt-[10px] h-[260px] rounded-[8px] bg-[#f8f8f7] pl-[13px] pr-[15px] pt-[11px]">
    <div className="-ml-[2px] flex items-center justify-between pr-[5px]">
      <span className="flex h-[21px] w-[60px] items-center rounded-full bg-[#e9e9e6] pl-[8px] text-[9px] font-semibold text-[#2c2a27]">
        <House className="mr-[4px] size-[10px]" />Report
      </span>
      <Sliders className="h-[8px] w-[10px] text-[#82817d]" />
    </div>
    <div className="mt-[14px] h-[240px] rounded-[8px] border border-[#eaeae8] bg-white px-[7px] pt-[6px]">
      <div className="flex h-[14px] items-center pl-px text-[9.600px] font-semibold text-[#32302c]"><Clipboard className="mr-[5px] size-[11px] text-[#55534f]" />Report</div>
      <Line className="mt-[8px] font-semibold"><span className="mr-[2px]">✦</span>올해 루틴 성공 횟수<Tag color="gray" className="ml-[3px]">4번</Tag></Line>
      <Line className="font-semibold"><span className="mr-[2px]">✦</span>올해 완료한 <span className="ml-[2px] text-[8px]">Task</span><Tag color="gray" className="ml-[3px]">5개</Tag></Line>
      <Line className="mt-[19px] font-semibold"><Glyph name="cycle" className="mr-[2px] size-[10px]" />다가오는 분기 목표<Glyph name="cycle" className="ml-[2px] size-[10px]" /></Line>
      <Line><span className="mr-[2px] font-bold">↪</span><span className="text-[#85837f]">예정된 분기 목표가 없습니다</span></Line>
      <Line className="mt-[8px] font-semibold"><Glyph name="planner" className="mr-[2px] size-[10px]" />다가오는 월간 목표<Glyph name="planner" className="ml-[2px] size-[10px]" /></Line>
      <Line className="font-semibold"><span className="mr-[2px]">↪</span><span className="mr-[2px] font-normal">☑</span>월간 회고 &amp; 하이라이트 정리<span className="ml-[5px] mr-[2px]">·····</span><span className="text-[8px]">D-9</span></Line>
      <Block className="mt-[6px]">
        <Heading><Glyph name="dividers" className="mr-[4px] size-[9px]" />Monthly Record<Glyph name="dividers" className="ml-[4px] size-[9px]" /></Heading>
      </Block>
      <Line className="mt-[7px] pl-[3px] text-[8.200px]! font-semibold">
        <span className="mb-[3px] mr-[3px] h-[5px] w-[6px] border-b border-l border-[#6d6b67]" />
        <span className="-ml-[2px]">【</span><QuarterCal className="mr-[4px] size-[8px]" />2026-01】
      </Line>
      <Line className="mt-[7px] text-[8.200px]! font-semibold"><Glyph name="check" className="mr-[2px] size-[10px]" />Monthly Task<Tag color="blue" className="ml-[2px]">1개</Tag></Line>
    </div>
  </section>
);

export default function App() {
  return (
    <div className="h-[839px] w-[1200px] overflow-hidden bg-white font-['Inter','Noto_Sans_CJK_KR',sans-serif] text-[#32302c]">
      <TopNav />
      <main className="mt-[18px] flex pl-[9px]">
        <LeftColumn />
        <div className="ml-[31px] w-[671px] shrink-0 pt-[15px]">
          <div className="flex gap-[41px] pl-[5px]">
            <CalendarCard />
            <InboxCard />
            <TodayCard />
          </div>
          <RoutineTable />
          <TaskBoard />
        </div>
        <aside className="ml-[31px] w-[224px] shrink-0">
          <WeeklyPanel />
          <Countdown />
          <ReportPanel />
        </aside>
      </main>
    </div>
  );
}
